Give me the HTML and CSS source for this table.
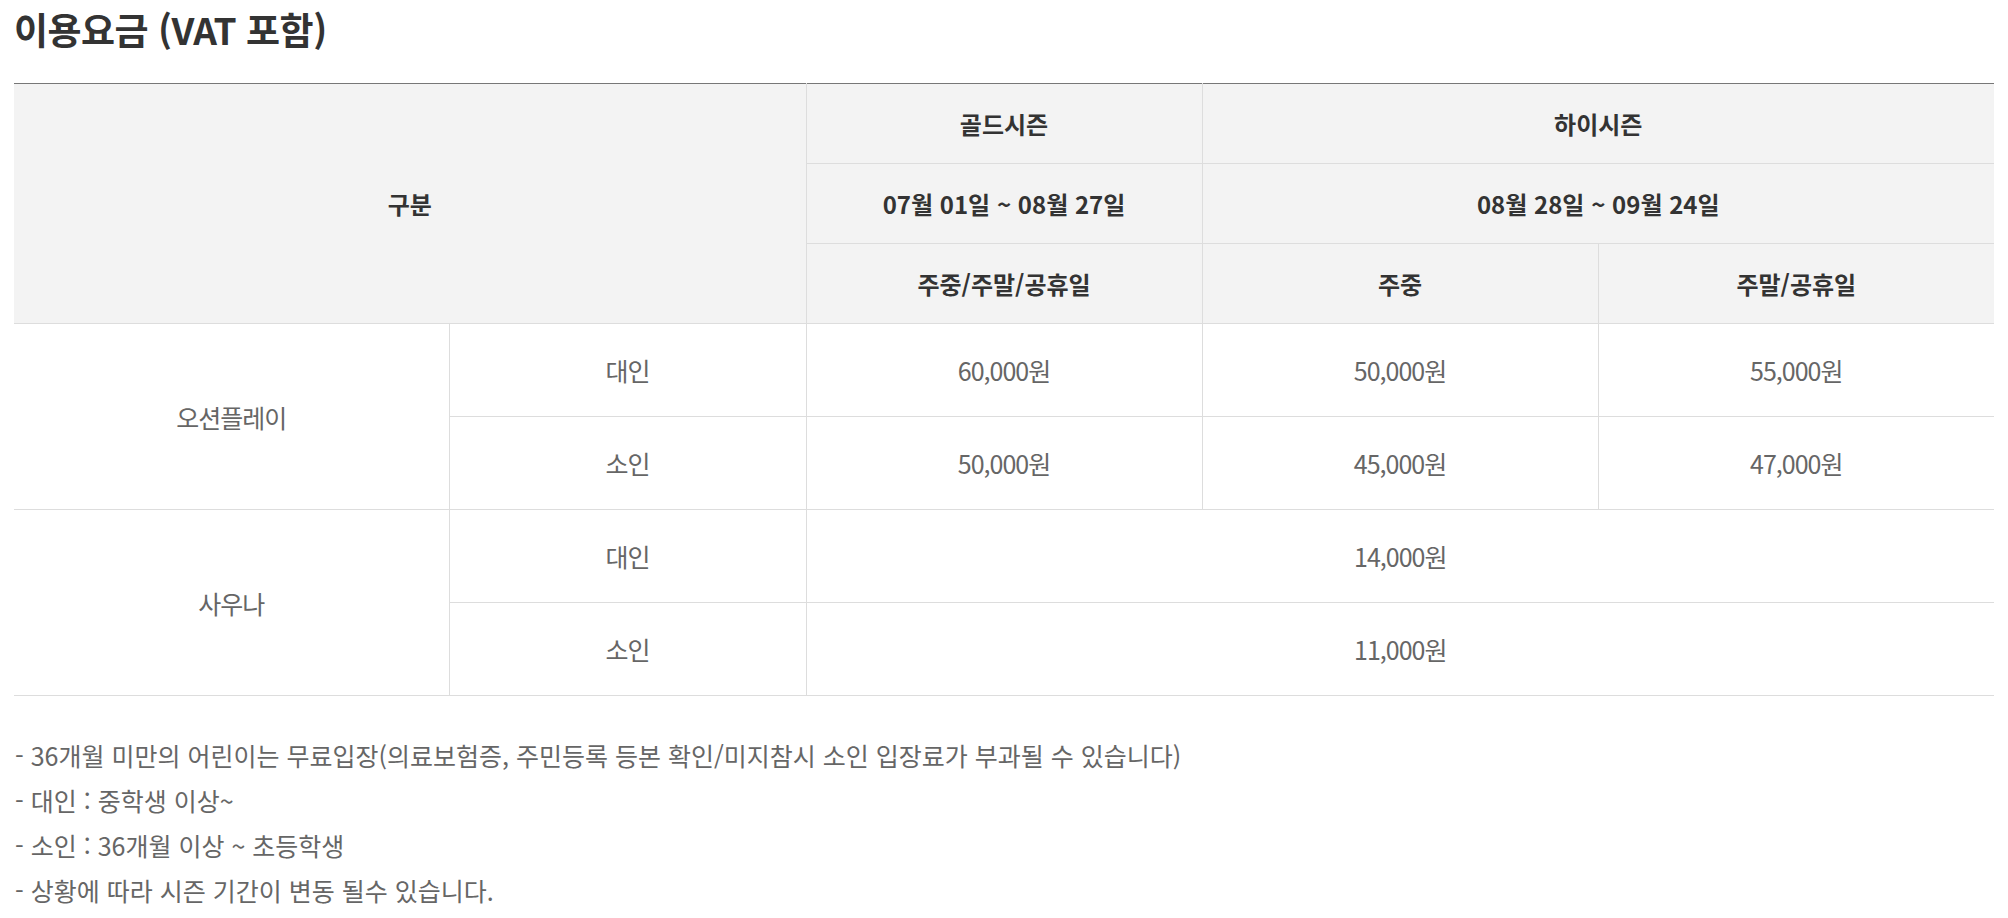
FILE: index.html
```html
<!DOCTYPE html>
<html lang="ko">
<head>
<meta charset="utf-8">
<title>이용요금</title>
<link rel="stylesheet" href="styles.css">
</head>
<body>
<div class="page">
  <h2 class="title">이용요금 (VAT 포함)</h2>
  <table class="price">
    <colgroup>
      <col class="c1"><col class="c2"><col class="c3"><col class="c4"><col class="c5">
    </colgroup>
    <thead>
      <tr>
        <th colspan="2" rowspan="3">구분</th>
        <th>골드시즌</th>
        <th colspan="2">하이시즌</th>
      </tr>
      <tr>
        <th>07월 01일 ~ 08월 27일</th>
        <th colspan="2">08월 28일 ~ 09월 24일</th>
      </tr>
      <tr>
        <th>주중/주말/공휴일</th>
        <th>주중</th>
        <th>주말/공휴일</th>
      </tr>
    </thead>
    <tbody>
      <tr>
        <td rowspan="2">오션플레이</td>
        <td>대인</td>
        <td>60,000원</td>
        <td>50,000원</td>
        <td>55,000원</td>
      </tr>
      <tr>
        <td>소인</td>
        <td>50,000원</td>
        <td>45,000원</td>
        <td>47,000원</td>
      </tr>
      <tr>
        <td rowspan="2">사우나</td>
        <td>대인</td>
        <td colspan="3">14,000원</td>
      </tr>
      <tr>
        <td>소인</td>
        <td colspan="3">11,000원</td>
      </tr>
    </tbody>
  </table>
  <ul class="notes">
    <li>- 36개월 미만의 어린이는 무료입장(의료보험증, 주민등록 등본 확인/미지참시 소인 입장료가 부과될 수 있습니다)</li>
    <li>- 대인 : 중학생 이상~</li>
    <li>- 소인 : 36개월 이상 ~ 초등학생</li>
    <li>- 상황에 따라 시즌 기간이 변동 될수 있습니다.</li>
  </ul>
</div>
</body>
</html>
```
FILE: styles.css
```css
html, body {
  margin: 0;
  padding: 0;
  background: #fff;
}
body {
  font-family: "Noto Sans CJK KR", "Noto Sans", sans-serif;
  color: #333;
}
.page {
  padding: 0 14px;
}
.title {
  margin: 5px 0 30px;
  font-size: 37px;
  line-height: 48px;
  font-weight: 700;
  color: #333;
  letter-spacing: -0.5px;
}
.price {
  width: 100%;
  border-collapse: collapse;
  table-layout: fixed;
  border-top: 1px solid #777;
  border-bottom: 1px solid #ddd;
}
.c1 { width: 435px; }
.c2 { width: 357px; }
.c3 { width: 396px; }
.c4 { width: 396px; }
.c5 { width: 396px; }
.price th,
.price td {
  border: 1px solid #ddd;
  text-align: center;
  vertical-align: middle;
  padding: 0;
  line-height: 30px;
}
.price tr > :first-child { border-left: 0; }
.price tr > :last-child { border-right: 0; }
.price th {
  background: #f3f3f3;
  font-size: 24px;
  font-weight: 700;
  color: #333;
  height: 79px;
}
.price thead tr:first-child th {
  border-top: 1px solid #777;
}
.price td {
  height: 92px;
  font-size: 25px;
  color: #666;
  font-weight: 400;
  letter-spacing: -1px;
}
.notes {
  list-style: none;
  margin: 37px 0 0;
  padding: 0 0 0 1px;
}
.notes li {
  font-size: 25px;
  line-height: 45px;
  color: #666;
  letter-spacing: 0;
}
```
